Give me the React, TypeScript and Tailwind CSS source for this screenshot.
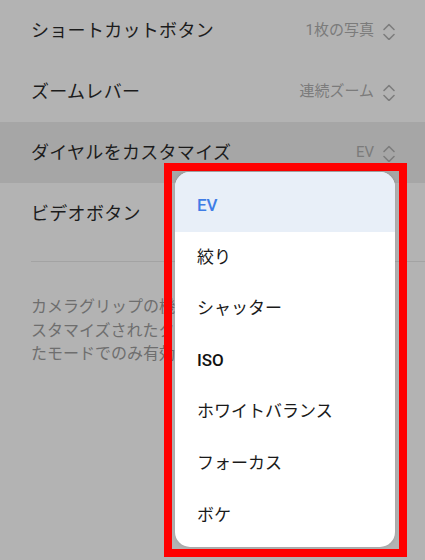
import { Fragment } from "react";

const rows = [
  { label: "ショートカットボタン", value: "1枚の写真" },
  { label: "ズームレバー", value: "連続ズーム" },
  { label: "ダイヤルをカスタマイズ", value: "EV", active: true },
  { label: "ビデオボタン", value: "" },
];

const options = [
  "EV",
  "絞り",
  "シャッター",
  "ISO",
  "ホワイトバランス",
  "フォーカス",
  "ボケ",
];

function UpDown() {
  return (
    <svg width="14" height="18" viewBox="0 0 14 18" fill="none">
      <path
        d="M2 7.5 L7 2.5 L12 7.5"
        stroke="#7d7d7d"
        strokeWidth="1.6"
        strokeLinecap="round"
        strokeLinejoin="round"
      />
      <path
        d="M2 12.5 L7 17.5 L12 12.5"
        stroke="#7d7d7d"
        strokeWidth="1.6"
        strokeLinecap="round"
        strokeLinejoin="round"
      />
    </svg>
  );
}

export default function App() {
  return (
    <div
      className="relative w-[425px] h-[560px] overflow-hidden bg-[#b3b3b3]"
      style={{ fontFamily: 'Roboto, "Noto Sans CJK JP", sans-serif' }}
    >
      {/* settings list */}
      <div className="flex flex-col">
        {rows.map((row) => (
          <div
            key={row.label}
            className={`flex h-[61px] items-center justify-between pl-[31px] pr-[29px] ${
              row.active ? "bg-[#a6a6a6]" : ""
            }`}
          >
            <span className="text-[18px] text-[#1c1c1c] tracking-[0.3px]">
              {row.label}
            </span>
            {row.value ? (
              <div className="flex items-center gap-[8px]">
                <span className="text-[15px] text-[#7b7b7b]">{row.value}</span>
                <UpDown />
              </div>
            ) : null}
          </div>
        ))}
      </div>

      <div className="ml-[31px] mt-[17px] h-px bg-[#a3a3a3]" />

      <p className="mt-[33px] px-[31px] text-[16px] leading-[23.5px] text-[#6e6e6e]">
        {[
          "カメラグリップの機能ダイヤルを回すと、カ",
          "スタマイズされたタイプを調整できます。選択し",
          "たモードでのみ有効です。",
        ].map((line, i) => (
          <Fragment key={i}>
            {line}
            <br />
          </Fragment>
        ))}
      </p>

      {/* highlight frame */}
      <div className="absolute left-[164px] top-[163px] w-[243px] h-[394px] border-[8px] border-[#ff0000]" />

      {/* dropdown */}
      <div className="absolute left-[175px] top-[172px] w-[220px] h-[375px] overflow-hidden rounded-[15px] bg-white shadow-[0_0_4px_rgba(0,0,0,0.12)]">
        {options.map((opt, i) => (
          <div
            key={opt}
            className={`flex items-center px-[22px] text-[17px] ${
              i === 0
                ? "h-[59.6px] pt-[8px] bg-[#e8eff8] text-[#3f7de6] font-medium"
                : opt === "ISO"
                ? "h-[51.6px] text-[#111] font-medium"
                : "h-[51.6px] text-[#1a1a1a]"
            }`}
          >
            {opt}
          </div>
        ))}
      </div>
    </div>
  );
}
